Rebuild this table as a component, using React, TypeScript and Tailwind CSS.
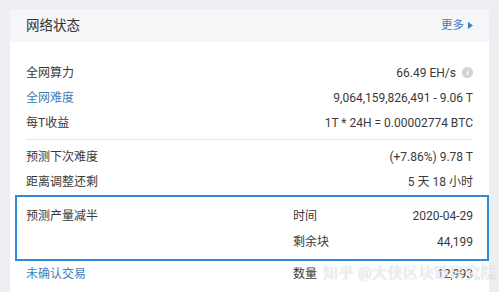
import React from 'react';

const font = { fontFamily: 'Roboto, "Noto Sans CJK SC", sans-serif' };

const Row = ({ label, value, blue, icon }: { label: string; value: string; blue?: boolean; icon?: boolean }) => (
  <div className="flex h-[25px] items-center justify-between">
    <span className={blue ? 'text-[#3d7fb8]' : 'text-[#3a3a3a]'}>{label}</span>
    <span className="flex items-center text-[#3a3a3a]">
      {value}
      {icon && (
        <span className="ml-[6px] flex h-[11px] w-[11px] items-center justify-center rounded-full bg-[#d0d2d6] text-[8px] font-bold leading-none text-white">
          i
        </span>
      )}
    </span>
  </div>
);

const App: React.FC = () => {
  return (
    <div className="h-[292px] w-[499px] overflow-hidden bg-[#eceef1] pl-[10px] pt-[9px] text-[12px]" style={font}>
      <div className="relative h-[300px] w-[479px] bg-white">
        {/* Header */}
        <div className="flex h-[33px] items-center justify-between bg-[#f5f6f8] px-4">
          <span className="text-[13.5px] text-[#333]">网络状态</span>
          <span className="flex items-center text-[11.5px] text-[#3d7fb8]">
            更多
            <svg width="5" height="7" viewBox="0 0 5 7" className="ml-[4px]">
              <path d="M0 0 L5 3.5 L0 7 Z" fill="#3d7fb8" />
            </svg>
          </span>
        </div>

        {/* Body */}
        <div className="px-4 pt-[18px]">
          <Row label="全网算力" value="66.49 EH/s" icon />
          <Row label="全网难度" value="9,064,159,826,491 - 9.06 T" blue />
          <Row label="每T收益" value="1T * 24H = 0.00002774 BTC" />
          <div className="mb-[4px] mt-[4px] h-px bg-[#e6e7ea]" />
          <Row label="预测下次难度" value="(+7.86%) 9.78 T" />
          <Row label="距离调整还剩" value="5 天 18 小时" />
        </div>

        {/* Halving box */}
        <div className="ml-[5px] mt-[1px] border-2 border-[#2f8bd6] pb-[4px] pl-[9px] pr-[14px] pt-[6px]">
          <div className="flex h-[26px] items-center">
            <span className="flex-1 text-[#3a3a3a]">预测产量减半</span>
            <div className="flex w-[180px] justify-between">
              <span className="text-[#3a3a3a]">时间</span>
              <span className="text-[#3a3a3a]">2020-04-29</span>
            </div>
          </div>
          <div className="flex h-[26px] items-center">
            <span className="flex-1" />
            <div className="flex w-[180px] justify-between">
              <span className="text-[#3a3a3a]">剩余块</span>
              <span className="text-[#3a3a3a]">44,199</span>
            </div>
          </div>
        </div>

        <div className="flex h-[26px] items-center px-4">
          <span className="flex-1 text-[#3d7fb8]">未确认交易</span>
          <div className="flex w-[180px] justify-between">
            <span className="text-[#3a3a3a]">数量</span>
            <span className="text-[#3a3a3a]">12,993</span>
          </div>
        </div>

        {/* watermark */}
        <div
          className="absolute left-[313px] top-[253px] whitespace-nowrap text-[15px] tracking-[0.5px] text-[#ffffffd9]"
          style={{ textShadow: '0 0 1px rgba(0,0,0,0.3)' }}
        >
          知乎 @大侠区块链研究院
        </div>
      </div>
    </div>
  );
};

export default App;
